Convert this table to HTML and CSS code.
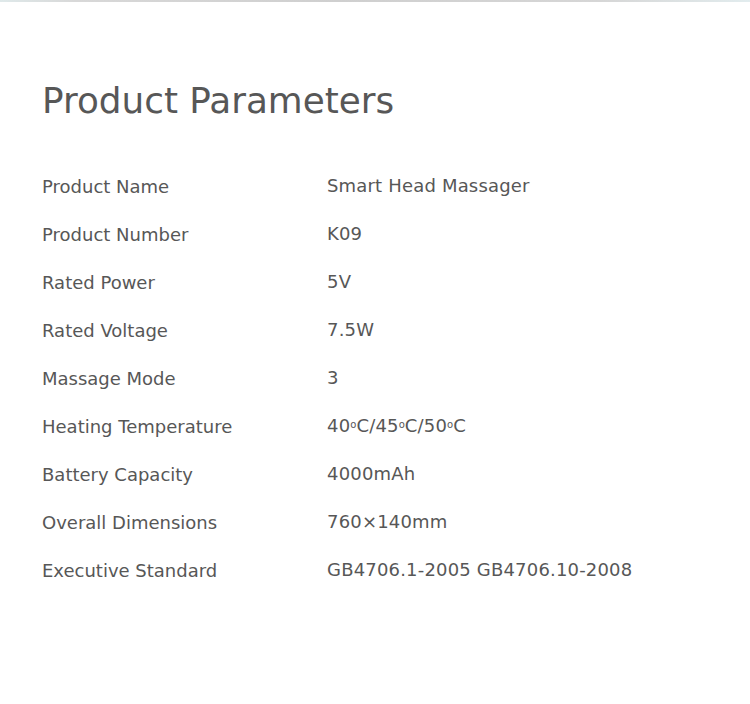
FILE: index.html
```html
<!DOCTYPE html>
<html>
<head>
<meta charset="utf-8">
<link rel="stylesheet" href="styles.css">
</head>
<body>
<div class="topline"></div>
<main class="page">
  <h1 class="title">Product Parameters</h1>
  <div class="params">
    <div class="label">Product Name</div><div class="value">Smart Head Massager</div>
    <div class="label">Product Number</div><div class="value">K09</div>
    <div class="label">Rated Power</div><div class="value">5V</div>
    <div class="label">Rated Voltage</div><div class="value">7.5W</div>
    <div class="label">Massage Mode</div><div class="value">3</div>
    <div class="label">Heating Temperature</div><div class="value">40<span class="deg">o</span>C/45<span class="deg">o</span>C/50<span class="deg">o</span>C</div>
    <div class="label">Battery Capacity</div><div class="value">4000mAh</div>
    <div class="label">Overall Dimensions</div><div class="value">760×140mm</div>
    <div class="label">Executive Standard</div><div class="value">GB4706.1-2005 GB4706.10-2008</div>
  </div>
</main>
</body>
</html>
```
FILE: styles.css
```css
html, body {
  margin: 0;
  padding: 0;
  background: #fff;
}
body {
  width: 750px;
  height: 704px;
  overflow: hidden;
  font-family: "DejaVu Sans", Verdana, sans-serif;
  color: #575757;
}
.topline {
  height: 2px;
  background: linear-gradient(90deg, #dfe9ea 0%, #d8d8d8 10%, #cfcfcf 45%, #d6d6d6 80%, #e2ecee 100%);
}
.page {
  padding: 0 42px;
}
.title {
  margin: 77px 0 0;
  font-size: 35.8px;
  font-weight: normal;
  line-height: 44px;
  color: #575757;
}
.params {
  margin-top: 52px;
  display: grid;
  grid-template-columns: 285px 1fr;
  grid-auto-rows: 48px;
  font-size: 18px;
  line-height: 24px;
}
.label {
  color: #575757;
}
.value {
  color: #575757;
  margin-top: -1px;
  letter-spacing: 0.18px;
}
.deg {
  font-size: 10px;
  vertical-align: 4px;
  line-height: 0;
  letter-spacing: 0;
}
```
